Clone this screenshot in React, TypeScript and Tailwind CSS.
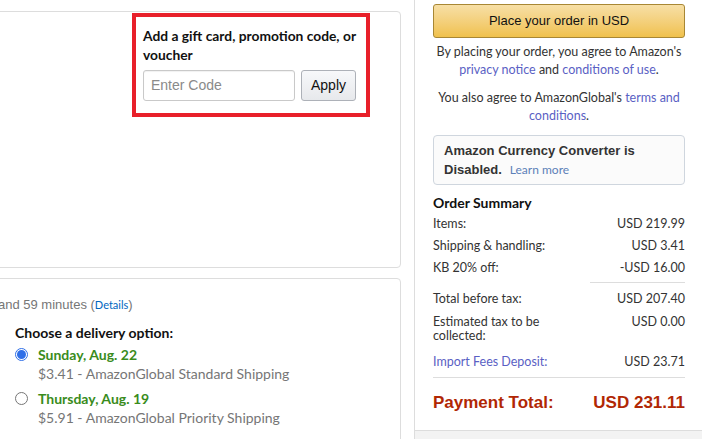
const ui = { fontFamily: 'Lato, "Noto Sans", sans-serif' };
const arial = { fontFamily: '"Liberation Sans", Arial, sans-serif' };

const summaryRows = [
  { label: "Items:", value: "USD 219.99" },
  { label: "Shipping & handling:", value: "USD 3.41" },
  { label: "KB 20% off:", value: "-USD 16.00" },
];

const deliveryOptions = [
  {
    date: "Sunday, Aug. 22",
    detail: "$3.41 - AmazonGlobal Standard Shipping",
    selected: true,
  },
  {
    date: "Thursday, Aug. 19",
    detail: "$5.91 - AmazonGlobal Priority Shipping",
    selected: false,
  },
];

function Radio({ selected }: { selected: boolean }) {
  if (selected) {
    return (
      <span className="mt-[3px] flex h-[13px] w-[13px] shrink-0 items-center justify-center rounded-full border border-[#2f6fe8] bg-white">
        <span className="h-[9px] w-[9px] rounded-full bg-[#2f6fe8]" />
      </span>
    );
  }
  return (
    <span className="mt-[3px] h-[13px] w-[13px] shrink-0 rounded-full border border-[#767676] bg-white" />
  );
}

function PromoPanel() {
  return (
    <div className="-ml-4 flex h-[257px] justify-end rounded-r-[4px] border border-[#dddddd] pr-[30px] pt-[1px]">
      <div className="h-[104px] w-[238px] border-4 border-[#e8202a] pl-[7px] pt-[9px]">
        <p
          className="text-[13.8px] font-bold leading-[19px] text-[#111111]"
          style={ui}
        >
          Add a gift card, promotion code, or voucher
        </p>
        <div className="mt-[6px] flex gap-[6px]">
          <div
            className="flex h-[31px] w-[152px] items-center rounded-[3px] border border-[#c9c9c9] px-[7px] text-[14px] text-[#8a8a8a] shadow-[inset_0_1px_1px_rgba(0,0,0,0.06)]"
            style={arial}
          >
            Enter Code
          </div>
          <button
            className="h-[31px] w-[55px] rounded-[3px] border border-[#adb1b8] bg-gradient-to-b from-[#f7f8fa] to-[#e7e9ec] text-[14px] text-[#111111]"
            style={arial}
          >
            Apply
          </button>
        </div>
      </div>
    </div>
  );
}

function DeliveryPanel() {
  return (
    <div className="-ml-4 mt-[10px] h-[200px] rounded-tr-[4px] border border-[#dddddd] pl-[14px] pt-[17px]">
      <p
        className="-ml-[1px] text-[13px] leading-[18px] text-[#767676]"
        style={arial}
      >
        and 59 minutes (
        <span className="text-[11px] text-[#0066c0]" style={ui}>
          Details
        </span>
        )
      </p>
      <div className="ml-[16px] mt-[9px]">
        <p
          className="text-[14px] font-bold leading-[20px] text-[#111111]"
          style={ui}
        >
          Choose a delivery option:
        </p>
        <div className="mt-[2px] flex flex-col gap-[6px]">
          {deliveryOptions.map((option) => (
            <div key={option.date} className="flex gap-[10px]">
              <Radio selected={option.selected} />
              <div style={ui}>
                <p className="text-[14px] font-bold leading-[19px] text-[#3a8c1c]">
                  {option.date}
                </p>
                <p className="text-[14px] leading-[19px] text-[#767676]">
                  {option.detail}
                </p>
              </div>
            </div>
          ))}
        </div>
      </div>
    </div>
  );
}

function OrderSidebar() {
  return (
    <div className="flex h-full w-[288px] shrink-0 flex-col border-l border-[#dddddd]">
      <div className="flex-1 pl-[18px] pr-[17px] pt-[4px]">
        <button
          className="h-[34px] w-full rounded-[3px] border border-[#a88734] bg-gradient-to-b from-[#f7dfa5] to-[#f0c14b] text-[13px] text-[#111111]"
          style={arial}
        >
          Place your order in USD
        </button>
        <div
          className="mt-[5px] text-center text-[12.5px] leading-[18px] text-[#333333]"
          style={ui}
        >
          <p>
            By placing your order, you agree to Amazon's{" "}
            <span className="text-[#5a5fc4]">privacy notice</span> and{" "}
            <span className="text-[#5a5fc4]">conditions of use</span>.
          </p>
          <p className="mt-[10px]">
            You also agree to AmazonGlobal's{" "}
            <span className="text-[#5a5fc4]">terms and conditions</span>.
          </p>
        </div>
        <div className="mt-[10px] h-[50px] rounded-[4px] border border-[#cfd6de] bg-[#fbfbfb] px-[10px] pt-[5px]">
          <p
            className="text-[13px] font-bold leading-[19px] text-[#333333]"
            style={arial}
          >
            Amazon Currency Converter is
            <br />
            Disabled.
            <span
              className="ml-[8px] text-[12px] font-normal text-[#5b80b8]"
              style={ui}
            >
              Learn more
            </span>
          </p>
        </div>
        <div className="mt-[8px]" style={ui}>
          <p className="text-[14px] font-bold leading-[20px] text-[#111111]">
            Order Summary
          </p>
          <div className="mt-[2px] text-[12.5px] leading-[17px] text-[#333333]">
            {summaryRows.map((row) => (
              <div key={row.label} className="mb-[5px] flex justify-between">
                <span>{row.label}</span>
                <span>{row.value}</span>
              </div>
            ))}
            <div className="mb-[7px] ml-auto mt-[6px] w-[95px] border-t border-[#dddddd]" />
            <div className="mb-[8px] flex justify-between">
              <span>Total before tax:</span>
              <span>USD 207.40</span>
            </div>
            <div className="mb-[10px] flex justify-between">
              <span className="w-[120px] leading-[14px]">
                Estimated tax to be collected:
              </span>
              <span className="leading-[14px]">USD 0.00</span>
            </div>
            <div className="mb-[7px] flex justify-between">
              <span className="text-[#5a5fc4]">Import Fees Deposit:</span>
              <span>USD 23.71</span>
            </div>
            <div className="border-t border-[#dddddd]" />
          </div>
          <div
            className="mt-[14px] flex justify-between text-[17px] font-bold leading-[22px] text-[#b12704]"
            style={arial}
          >
            <span>Payment Total:</span>
            <span>USD 231.11</span>
          </div>
        </div>
      </div>
      <div className="h-[9px] border-t border-[#dddddd] bg-[#f3f3f3]" />
    </div>
  );
}

export default function App() {
  return (
    <div className="flex h-[439px] w-[702px] overflow-hidden bg-white">
      <div className="w-[414px] shrink-0 pr-[13px] pt-[11px]">
        <PromoPanel />
        <DeliveryPanel />
      </div>
      <OrderSidebar />
    </div>
  );
}
